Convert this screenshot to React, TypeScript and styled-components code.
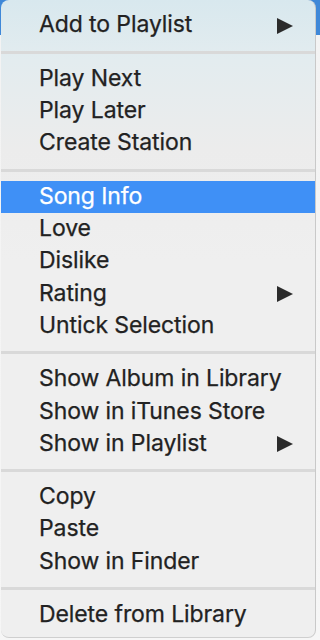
import React from "react";
import styled, { createGlobalStyle } from "styled-components";

const Global = createGlobalStyle`
  html, body { margin: 0; padding: 0; }
  body {
    width: 320px;
    height: 640px;
    overflow: hidden;
    background: linear-gradient(#3f88d8 0, #3f88d8 35px, #f3f3f3 35px, #f6f6f6 100%);
    font-family: Inter, "Liberation Sans", Arial, sans-serif;
  }
`;

const Page = styled.div`
  position: relative;
  width: 320px;
  height: 640px;
`;

const Menu = styled.div`
  position: absolute;
  left: 1px;
  top: 0;
  width: 315px;
  height: 638px;
  box-sizing: border-box;
  padding-top: 9.4px;
  border-radius: 8px;
  border-right: 1px solid #c9c9c9;
  border-bottom: 1px solid #cfcfcf;
  background: linear-gradient(#d8e8ee 0, #e3ecef 60px, #ececec 150px, #efefef 260px, #efefef 100%);
  overflow: hidden;
  display: flex;
  flex-direction: column;
`;

const Row = styled.div<{ $active?: boolean }>`
  height: 32.2px;
  flex: none;
  display: flex;
  align-items: center;
  justify-content: space-between;
  box-sizing: border-box;
  padding: 0 22px 2px 38px;
  font-size: 23px;
  letter-spacing: -0.1px;
  -webkit-text-stroke: 0.25px ${(p) => (p.$active ? "#ffffff" : "#222222")};
  color: ${(p) => (p.$active ? "#ffffff" : "#222222")};
  background: ${(p) => (p.$active ? "#3f90f6" : "transparent")};
`;

const Label = styled.span`
  white-space: nowrap;
`;

const Separator = styled.div`
  height: 21.4px;
  flex: none;
  display: flex;
  align-items: center;
  &::after {
    content: "";
    display: block;
    width: 100%;
    height: 3px;
    background: #d9d9d9;
  }
`;

const Arrow = styled.svg`
  width: 16px;
  height: 16px;
  flex: none;
  margin-top: 3px;
`;

const SubArrow = () => (
  <Arrow viewBox="0 0 16 16">
    <polygon points="0,0 16,8 0,16" fill="#2b2b2b" />
  </Arrow>
);

type Item = { label: string; sub?: boolean; active?: boolean } | "sep";

const items: Item[] = [
  { label: "Add to Playlist", sub: true },
  "sep",
  { label: "Play Next" },
  { label: "Play Later" },
  { label: "Create Station" },
  "sep",
  { label: "Song Info", active: true },
  { label: "Love" },
  { label: "Dislike" },
  { label: "Rating", sub: true },
  { label: "Untick Selection" },
  "sep",
  { label: "Show Album in Library" },
  { label: "Show in iTunes Store" },
  { label: "Show in Playlist", sub: true },
  "sep",
  { label: "Copy" },
  { label: "Paste" },
  { label: "Show in Finder" },
  "sep",
  { label: "Delete from Library" },
];

export default function App() {
  return (
    <Page>
      <Global />
      <Menu>
        {items.map((it, i) =>
          it === "sep" ? (
            <Separator key={i} />
          ) : (
            <Row key={i} $active={it.active}>
              <Label>{it.label}</Label>
              {it.sub && <SubArrow />}
            </Row>
          )
        )}
      </Menu>
    </Page>
  );
}
